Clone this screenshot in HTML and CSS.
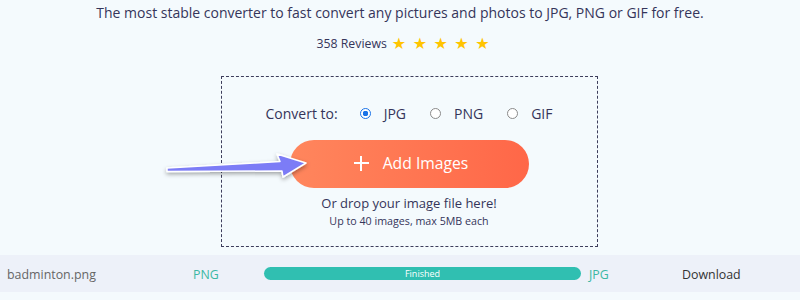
FILE: index.html
```html
<!DOCTYPE html>
<html>
<head>
<meta charset="utf-8">
<link rel="stylesheet" href="styles.css">
</head>
<body>
<div class="page">
  <p class="tagline">The most stable converter to fast convert any pictures and photos to JPG, PNG or GIF for free.</p>
  <div class="reviews">
    <span class="count">358 Reviews</span>
    <span class="stars"><span>★</span><span>★</span><span>★</span><span>★</span><span>★</span></span>
  </div>
  <div class="dropzone">
    <div class="convert">
      <span class="label">Convert to:</span>
      <span class="opt"><span class="radio checked"></span>JPG</span>
      <span class="opt"><span class="radio"></span>PNG</span>
      <span class="opt"><span class="radio"></span>GIF</span>
    </div>
    <button class="add"><span class="plus"></span>Add Images</button>
    <p class="drop">Or drop your image file here!</p>
    <p class="limit">Up to 40 images, max 5MB each</p>
  </div>
  <div class="filerow">
    <span class="fname">badminton.png</span>
    <span class="fmt">PNG</span>
    <span class="barcell"><span class="bar">Finished</span></span>
    <span class="fmt">JPG</span>
    <span class="dl">Download</span>
  </div>
  <svg class="arrow" width="160" height="50" viewBox="0 0 160 50">
    <defs>
      <filter id="sh" x="-20%" y="-50%" width="140%" height="200%">
        <feDropShadow dx="0" dy="2" stdDeviation="2" flood-color="#000" flood-opacity="0.35"/>
      </filter>
    </defs>
    <path d="M7 22 L120 15.5 L117 8 L146 17 L123 31 L122 25 L7 25.5 Z" fill="#7c7cf6" stroke="#fff" stroke-width="1.5" stroke-linejoin="round" filter="url(#sh)"/>
  </svg>
</div>
</body>
</html>
```
FILE: styles.css
```css
* { box-sizing: border-box; }
html, body { margin: 0; padding: 0; }
body {
  background: #f4fafd;
  font-family: "Open Sans", "Noto Sans", sans-serif;
  color: #35355a;
  width: 800px;
  height: 300px;
  overflow: hidden;
}
.page {
  position: relative;
  display: flex;
  flex-direction: column;
  align-items: center;
}
.tagline {
  margin: 3px 0 0;
  font-size: 14px;
  line-height: 20px;
}
.reviews {
  margin-top: 12px;
  margin-left: 6px;
  height: 18px;
  display: flex;
  align-items: center;
  font-size: 12.3px;
  line-height: 18px;
}
.count { margin-right: 5px; }
.stars { display: flex; gap: 6.5px; color: #ffc400; font-family: "DejaVu Sans", sans-serif; font-size: 16px; }
.dropzone {
  margin-top: 23px;
  margin-left: 18px;
  width: 377px;
  height: 171px;
  border: 1px dashed #3d3d5c;
  display: flex;
  flex-direction: column;
  align-items: center;
}
.convert {
  margin-top: 25px;
  height: 22px;
  display: flex;
  align-items: center;
  font-size: 14px;
}
.label { margin-right: 22px; }
.opt { display: flex; align-items: center; margin-right: 24px; }
.opt:last-child { margin-right: 0; }
.radio {
  width: 11px;
  height: 11px;
  border-radius: 50%;
  border: 1px solid #8a8a8a;
  background: #fff;
  margin-right: 13px;
}
.radio.checked {
  border: 1.5px solid #1a73e8;
  background: radial-gradient(circle, #1a73e8 0 2.6px, #fff 3px);
}
.add {
  margin-top: 16px;
  width: 239px;
  height: 48px;
  border: none;
  border-radius: 24px;
  background: linear-gradient(90deg, #ff865d, #ff6748);
  color: #fff;
  font-family: inherit;
  font-size: 15.7px;
  display: flex;
  align-items: center;
  justify-content: center;
  padding: 0 0 2px 4px;
}
.plus {
  position: relative;
  width: 15px;
  height: 15px;
  margin-right: 14px;
}
.plus::before, .plus::after {
  content: "";
  position: absolute;
  background: #fff;
}
.plus::before { left: 6.5px; top: 0; width: 2px; height: 15px; }
.plus::after { top: 6.5px; left: 0; height: 2px; width: 15px; }
.drop {
  margin: 6px 0 0;
  font-size: 13px;
  line-height: 19px;
}
.limit {
  margin: 0;
  font-size: 10.7px;
  line-height: 17px;
}
.filerow {
  margin-top: 8px;
  width: 800px;
  height: 37px;
  background: #edf1f9;
  display: grid;
  grid-template-columns: 186px 71px 325px 93px auto;
  align-items: center;
  padding: 2px 0 0 7px;
  font-size: 12.4px;
}
.fname { color: #666; }
.fmt { color: #3bb8a4; }
.dl { color: #333; }
.barcell { display: flex; margin-top: -2px; }
.bar {
  width: 317px;
  height: 13px;
  border-radius: 7px;
  background: #30bfb1;
  color: #fff;
  font-size: 9px;
  line-height: 13px;
  text-align: center;
}
.arrow {
  position: absolute;
  left: 160px;
  top: 146px;
}
```
